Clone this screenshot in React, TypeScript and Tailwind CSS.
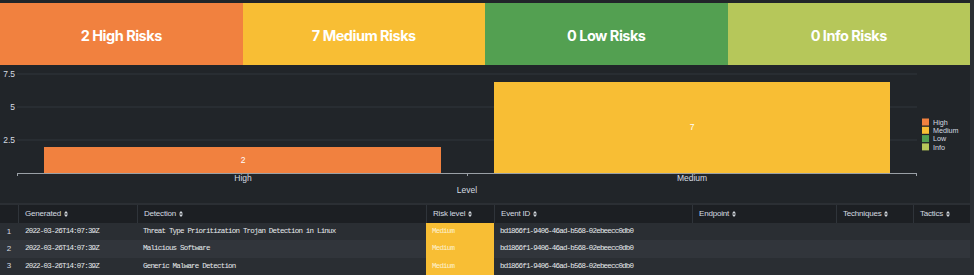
const tiles = [
  { label: "2 High Risks", bg: "bg-[#f1813f]" },
  { label: "7 Medium Risks", bg: "bg-[#f8be34]" },
  { label: "0 Low Risks", bg: "bg-[#53a051]" },
  { label: "0 Info Risks", bg: "bg-[#b6c75a]" },
];

const legend = [
  { name: "High", color: "#f1813f" },
  { name: "Medium", color: "#f8be34" },
  { name: "Low", color: "#53a051" },
  { name: "Info", color: "#b6c75a" },
];

const columns = [
  { title: "", w: "w-[18px]" },
  { title: "Generated", w: "w-[119px]" },
  { title: "Detection", w: "w-[289px]" },
  { title: "Risk level", w: "w-[68px]" },
  { title: "Event ID", w: "w-[198px]" },
  { title: "Endpoint", w: "w-[144px]" },
  { title: "Techniques", w: "w-[77px]" },
  { title: "Tactics", w: "w-[57px]" },
];

const rows = [
  { generated: "2022-03-26T14:07:39Z", detection: "Threat Type Prioritization Trojan Detection in Linux" },
  { generated: "2022-03-26T14:07:39Z", detection: "Malicious Software" },
  { generated: "2022-03-26T14:07:39Z", detection: "Generic Malware Detection" },
];

const eventId = "bd1866f1-9406-46ad-b568-02ebeecc0db0";
const mono = { fontFamily: "'Liberation Mono', monospace" };

const SortIcon = () => (
  <svg width="4" height="6" viewBox="0 0 4 6" className="ml-[3px] inline-block">
    <path d="M2 0 L4 2.4 H0 Z" fill="#d5dbe1" />
    <path d="M2 6 L4 3.6 H0 Z" fill="#d5dbe1" />
  </svg>
);

const Chart = () => {
  const label = "#d5dbe1";
  return (
    <svg width="970" height="138" viewBox="0 0 970 138" style={{ fontFamily: "'Liberation Sans', Arial, sans-serif" }}>
      {[9, 42, 75].map((y) => (
        <line key={y} x1="17" x2="917" y1={y} y2={y} stroke="#30363c" strokeWidth="1" />
      ))}
      {[
        { y: 9, t: "7.5" },
        { y: 42, t: "5" },
        { y: 75, t: "2.5" },
      ].map((l) => (
        <text key={l.t} x="15" y={l.y + 3} textAnchor="end" fontSize="8.5" fill={label}>
          {l.t}
        </text>
      ))}
      <rect x="44" y="82" width="397" height="26" fill="#f1813f" />
      <rect x="494" y="17" width="396" height="91" fill="#f8be34" />
      <text x="243" y="98" textAnchor="middle" fontSize="8.5" fill="#ffffff">2</text>
      <text x="692" y="65" textAnchor="middle" fontSize="8.5" fill="#ffffff">7</text>
      <line x1="17" x2="917" y1="108.5" y2="108.5" stroke="#9aa0a6" strokeWidth="1" />
      {[17.5, 467.5, 916.5].map((x) => (
        <line key={x} x1={x} x2={x} y1="108" y2="111" stroke="#9aa0a6" strokeWidth="1" />
      ))}
      <text x="243" y="116" textAnchor="middle" fontSize="8.5" fill={label}>High</text>
      <text x="692" y="116" textAnchor="middle" fontSize="8.5" fill={label}>Medium</text>
      <text x="467" y="128" textAnchor="middle" fontSize="8.5" fill={label}>Level</text>
      {legend.map((l, i) => (
        <g key={l.name}>
          <rect x="922" y={53.5 + i * 8.3} width="7" height="7" fill={l.color} />
          <text x="933" y={59.6 + i * 8.3} fontSize="7.2" fill={label}>
            {l.name}
          </text>
        </g>
      ))}
    </svg>
  );
};

export default function App() {
  return (
    <div className="w-[974px] h-[275px] overflow-hidden bg-[#2b2f34]">
      <div className="w-[970px]">
        <div className="h-[3px] bg-[#212529]" />
        <div className="grid grid-cols-4 h-[62px]">
          {tiles.map((t) => (
            <div
              key={t.label}
              className={`${t.bg} flex items-center justify-center pt-[4px] text-white font-bold text-[14.5px] tracking-[-0.5px]`}
              style={{ fontFamily: "Inter, 'Liberation Sans', sans-serif" }}
            >
              {t.label}
            </div>
          ))}
        </div>
        <div className="h-[138px] bg-[#212529]">
          <Chart />
        </div>
        <div className="h-[2px] bg-[#2b2f34]" />
        <div className="text-[8px]" style={{ fontFamily: "'Liberation Sans', Arial, sans-serif" }}>
          <div className="flex h-[18px] bg-[#1c1f23]">
            {columns.map((c, i) => (
              <div
                key={i}
                className={`${c.w} flex items-center pl-[6px] text-[#d5dbe1] tracking-[-0.2px] ${i > 0 ? "border-l border-[#2f343a]" : ""}`}
              >
                {c.title}
                {c.title && <SortIcon />}
              </div>
            ))}
          </div>
          {rows.map((r, i) => (
            <div key={i} className={`flex h-[17.4px] ${i === 1 ? "bg-[#31353b]" : "bg-[#2a2e33]"}`}>
              <div className="w-[18px] flex items-center justify-center text-[#d5dbe1]">{i + 1}</div>
              {[r.generated, r.detection].map((v, j) => (
                <div
                  key={j}
                  className={`${j === 0 ? "w-[119px] pl-[7px]" : "w-[289px] pl-[6px]"} flex items-center text-[#e6e9ec] text-[7.5px] tracking-[-0.8px]`}
                  style={mono}
                >
                  {v}
                </div>
              ))}
              <div
                className="w-[68px] pl-[6px] flex items-center bg-[#f8be34] text-[#fdf1cf] text-[7.5px] tracking-[-0.8px]"
                style={mono}
              >
                Medium
              </div>
              <div
                className="w-[198px] pl-[6px] flex items-center text-[#e6e9ec] text-[7.5px] tracking-[-0.8px]"
                style={mono}
              >
                {eventId}
              </div>
              <div className="w-[144px]" />
              <div className="w-[77px]" />
              <div className="w-[57px]" />
            </div>
          ))}
        </div>
      </div>
    </div>
  );
}
